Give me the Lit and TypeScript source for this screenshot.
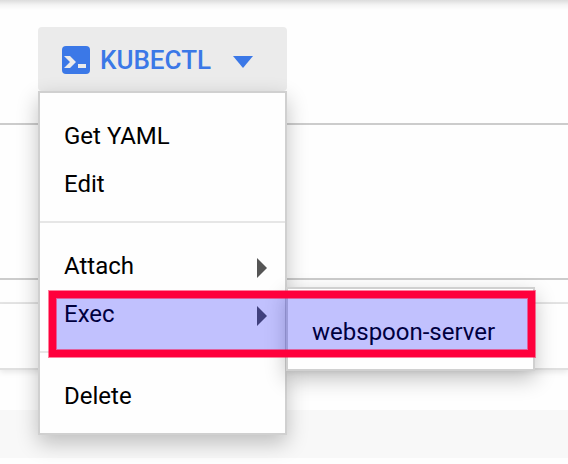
import { LitElement, html, css, svg, nothing } from "lit";
import { customElement, property } from "lit/decorators.js";

interface MenuEntry {
  label: string;
  submenu?: string[];
  open?: boolean;
}

const GROUPS: MenuEntry[][] = [
  [{ label: "Get YAML" }, { label: "Edit" }],
  [{ label: "Attach", submenu: [] }, { label: "Exec", submenu: ["webspoon-server"], open: true }],
  [{ label: "Delete" }],
];

const terminalIcon = svg`
  <rect width="28" height="28" rx="4" fill="#3b78e7"></rect>
  <path d="M2 10h6l6 6-6 6H2l6-6z" fill="#ebebeb"></path>
  <rect x="16" y="18" width="8" height="4" fill="#ebebeb"></rect>`;

@customElement("menu-panel")
class MenuPanel extends LitElement {
  @property({ attribute: false }) groups: MenuEntry[][] = [];

  static styles = css`
    :host {
      display: block;
      box-sizing: border-box;
      border: 2px solid #d0d0d0;
      background: #fefefe;
      box-shadow: 0 8px 20px rgba(0, 0, 0, 0.24);
    }
    .group {
      padding: 19px 0 13px;
    }
    .group + .group {
      border-top: 2px solid #e6e6e6;
    }
    .row {
      position: relative;
    }
    .item {
      display: flex;
      align-items: center;
      justify-content: space-between;
      width: 100%;
      height: 48px;
      margin: 0;
      padding: 0 18px 0 24px;
      border: 0;
      background: none;
      color: #000;
      font: 400 24px/28px Roboto, sans-serif;
      text-align: left;
      white-space: nowrap;
      cursor: pointer;
    }
    .arrow {
      width: 10px;
      height: 20px;
      margin-top: 4px;
      fill: #555;
    }
    .submenu {
      position: absolute;
      left: 100%;
      top: -3px;
      width: 249px;
      margin-left: 1px;
    }
  `;

  render() {
    return this.groups.map(
      (group) => html`<div class="group">
        ${group.map(
          (entry) => html`<div class="row">
            <button class="item" type="button">
              <span>${entry.label}</span>
              ${entry.submenu
                ? html`<svg class="arrow" viewBox="0 0 10 20" aria-hidden="true"><path d="M0 0l10 10L0 20z"></path></svg>`
                : nothing}
            </button>
            ${entry.open && entry.submenu
              ? html`<menu-panel class="submenu" .groups=${[entry.submenu.map((label) => ({ label }))]}></menu-panel>`
              : nothing}
          </div>`
        )}
      </div>`
    );
  }
}

@customElement("app-root")
class AppRoot extends LitElement {
  static styles = css`
    :host {
      display: block;
      position: relative;
      min-height: 100vh;
      overflow: hidden;
      background: #fefefe;
      font-family: Roboto, sans-serif;
    }
    .toolbar {
      box-sizing: border-box;
      height: 125px;
      padding: 27px 38px 0;
      border-bottom: 2px solid #ccc;
      background: linear-gradient(#dcdcdc, #f4f4f4 5px, #fefefe 10px);
    }
    .anchor {
      position: relative;
      width: 249px;
    }
    .trigger {
      display: flex;
      align-items: center;
      width: 100%;
      height: 64px;
      margin: 0;
      padding: 2px 24px 0;
      border: 0;
      border-radius: 4px;
      background: #ebebeb;
      color: #3b78e7;
      font: 500 26px/32px Roboto, sans-serif;
      cursor: pointer;
    }
    .terminal {
      width: 28px;
      height: 28px;
      margin-right: 10px;
    }
    .caret {
      width: 20px;
      height: 12px;
      margin: 4px 0 0 22px;
      fill: currentColor;
    }
    .menu {
      position: absolute;
      z-index: 1;
      top: 100%;
      left: 0;
      width: 100%;
    }
    .band {
      height: 153px;
      border-bottom: 2px solid #ccc;
    }
    .gap {
      height: 22px;
      border-bottom: 2px solid #e6e6e6;
    }
    .card {
      height: 64px;
      border-bottom: 2px solid #e0e0e0;
      box-shadow: 0 2px 6px rgba(0, 0, 0, 0.1);
    }
    .footer {
      height: 48px;
      margin-top: 40px;
      background: #f8f8f8;
    }
    .highlight {
      position: absolute;
      z-index: 2;
      top: 291px;
      left: 49px;
      box-sizing: border-box;
      width: 486px;
      height: 66px;
      border: 7px solid #ff003c;
      background: rgba(0, 0, 255, 0.24);
      background-clip: padding-box;
      box-shadow: 0 0 0 1px rgba(255, 0, 60, 0.5), inset 0 0 0 1px rgba(255, 0, 60, 0.5);
      pointer-events: none;
    }
  `;

  render() {
    return html`
      <header class="toolbar">
        <div class="anchor">
          <button class="trigger" type="button" aria-haspopup="true" aria-expanded="true">
            <svg class="terminal" viewBox="0 0 28 28" aria-hidden="true">${terminalIcon}</svg>
            <span>KUBECTL</span>
            <svg class="caret" viewBox="0 0 20 12" aria-hidden="true"><path d="M0 0h20L10 12z"></path></svg>
          </button>
          <menu-panel class="menu" .groups=${GROUPS}></menu-panel>
        </div>
      </header>
      <div class="band"></div>
      <div class="gap"></div>
      <div class="card"></div>
      <div class="footer"></div>
      <div class="highlight"></div>
    `;
  }
}
